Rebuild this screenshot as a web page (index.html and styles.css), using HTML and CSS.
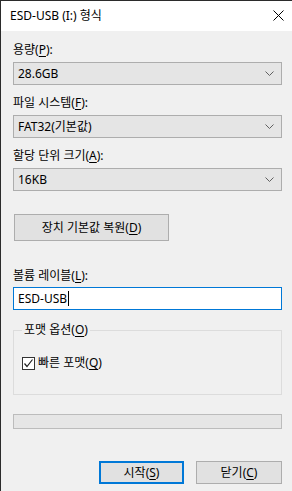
FILE: index.html
```html
<!DOCTYPE html>
<html>
<head>
    <meta charset="utf-8">
    <link rel="stylesheet" href="styles.css">
</head>
<body>
    <div class="window">
        <div class="titlebar">
            <span class="title">ESD-USB (I:) 형식</span>
            <svg class="close" width="11" height="11" viewBox="0 0 11 11">
                <path d="M0.5 0.5 L10.5 10.5 M10.5 0.5 L0.5 10.5" stroke="#000" stroke-width="1" fill="none"/>
            </svg>
        </div>

        <div class="content">
            <div class="label first">용량(<u>P</u>):</div>
            <div class="combo">
                <span>28.6GB</span>
                <svg class="chev" width="9" height="5" viewBox="0 0 9 5"><path d="M0.5 0.5 L4.5 4.5 L8.5 0.5" stroke="#606060" fill="none"/></svg>
            </div>

            <div class="label">파일 시스템(<u>F</u>):</div>
            <div class="combo">
                <span>FAT32(기본값)</span>
                <svg class="chev" width="9" height="5" viewBox="0 0 9 5"><path d="M0.5 0.5 L4.5 4.5 L8.5 0.5" stroke="#606060" fill="none"/></svg>
            </div>

            <div class="label">할당 단위 크기(<u>A</u>):</div>
            <div class="combo">
                <span>16KB</span>
                <svg class="chev" width="9" height="5" viewBox="0 0 9 5"><path d="M0.5 0.5 L4.5 4.5 L8.5 0.5" stroke="#606060" fill="none"/></svg>
            </div>

            <button class="btn restore">장치 기본값 복원(<u>D</u>)</button>

            <div class="label volume">볼륨 레이블(<u>L</u>):</div>
            <div class="textbox">ESD-USB<span class="caret"></span></div>

            <fieldset class="group">
                <legend>포맷 옵션(<u>O</u>)</legend>
                <div class="check-row">
                    <span class="checkbox">
                        <svg width="11" height="11" viewBox="0 0 11 11"><path d="M1.5 5.5 L4 8.5 L9.5 1.5" stroke="#202020" stroke-width="1.2" fill="none"/></svg>
                    </span>
                    <span>빠른 포맷(<u>Q</u>)</span>
                </div>
            </fieldset>

            <div class="progress"></div>

            <div class="actions">
                <button class="btn primary">시작(<u>S</u>)</button>
                <button class="btn">닫기(<u>C</u>)</button>
            </div>
        </div>
    </div>
</body>
</html>
```

FILE: styles.css
```css
body {
    margin: 0;
    overflow: hidden;
    font-family: "Noto Sans", "Noto Sans CJK KR", sans-serif;
    font-size: 12px;
    color: #000;
}

.window {
    width: 291px;
    height: 490px;
    border-top: 1px solid #2b2b2b;
    border-left: 1px solid #2b2b2b;
    display: flex;
    flex-direction: column;
    background: #f0f0f0;
}

.titlebar {
    height: 30px;
    background: #fff;
    display: flex;
    align-items: center;
    justify-content: space-between;
    padding: 0 8px 0 9px;
    flex-shrink: 0;
}

.title {
    font-size: 12px;
    line-height: 16px;
}

.close {
    display: block;
    margin-top: -1px;
}

.content {
    flex: 1;
    padding: 11px 10px 0 12px;
    display: flex;
    flex-direction: column;
}

.label {
    line-height: 16px;
    height: 16px;
    margin-top: 10px;
    margin-bottom: 4px;
}

.label.first {
    margin-top: 0;
}

u {
    text-decoration-thickness: 1px;
    text-underline-offset: 2px;
}

.combo {
    height: 21px;
    border: 1px solid #adadad;
    background: #e5e5e5;
    display: flex;
    align-items: center;
    justify-content: space-between;
    padding: 0 7px 0 4px;
    line-height: 16px;
}

.chev {
    display: block;
}

.btn {
    font-family: inherit;
    font-size: 12px;
    color: #000;
    background: #e1e1e1;
    border: 1px solid #adadad;
    margin: 0;
    padding: 0;
    line-height: 16px;
}

.restore {
    width: 155px;
    height: 27px;
    margin-top: 23px;
    align-self: flex-start;
    margin-left: 1px;
}

.label.volume {
    margin-top: 27px;
    margin-bottom: 3px;
}

.textbox {
    height: 21px;
    border: 1px solid #0078d7;
    background: #fff;
    display: flex;
    align-items: center;
    padding: 0 4px;
    line-height: 16px;
}

.caret {
    display: inline-block;
    width: 1px;
    height: 15px;
    background: #000;
    margin-left: 1px;
}

.group {
    margin: 12px 0 0 0;
    padding: 17px 8px 0 8px;
    border: 1px solid #dcdcdc;
    height: 73px;
    box-sizing: border-box;
    min-width: 0;
}

.group legend {
    padding: 0 2px;
    margin-left: 0;
    line-height: 16px;
}

.check-row {
    display: flex;
    align-items: center;
    gap: 3px;
    line-height: 16px;
}

.checkbox {
    width: 11px;
    height: 11px;
    border: 1px solid #333;
    background: #fff;
    display: flex;
}

.progress {
    height: 13px;
    margin-top: 19px;
    border: 1px solid #bcbcbc;
    background: #e6e6e6;
}

.actions {
    display: flex;
    justify-content: flex-end;
    gap: 12px;
    margin-top: 32px;
}

.actions .btn {
    width: 86px;
    height: 23px;
}

.actions .primary {
    border: 2px solid #0078d7;
    width: 85px;
}
```
